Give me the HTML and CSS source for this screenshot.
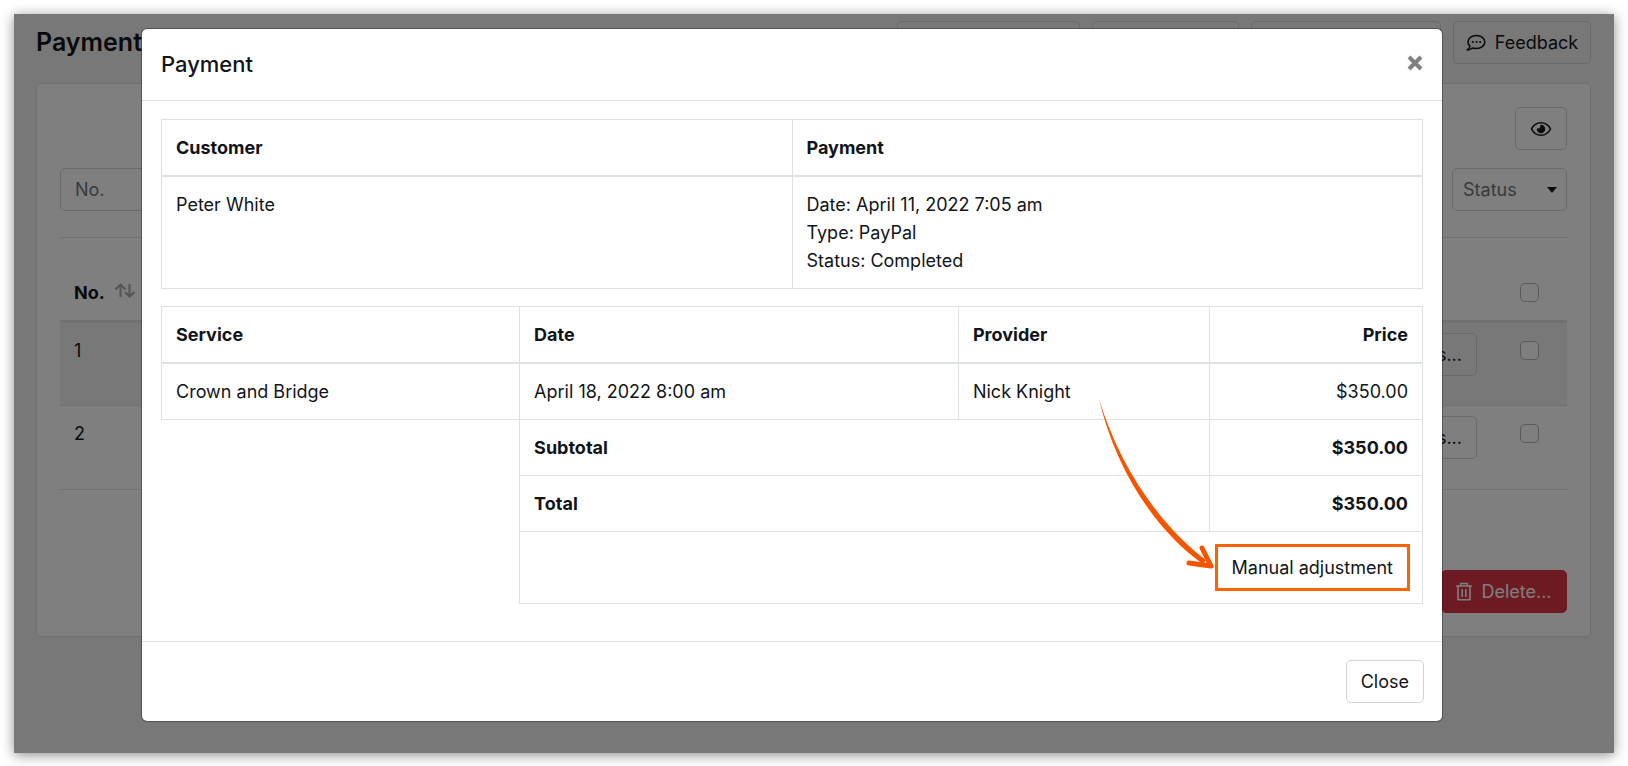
FILE: index.html
```html
<!DOCTYPE html>
<html lang="en">
<head>
    <meta charset="UTF-8">
    <meta name="viewport" content="width=device-width, initial-scale=1.0">
    <title>Payments</title>
    <link rel="stylesheet" href="styles.css">
</head>
<body>
    <div class="screen">
        <div class="page">
            <div class="page-header">
                <h1 class="page-title">Payments</h1>
                <div class="toolbar">
                    <button type="button" class="btn btn-export" aria-label="Export"></button>
                    <button type="button" class="btn btn-print" aria-label="Print"></button>
                    <button type="button" class="btn btn-requests" aria-label="Requests"></button>
                    <button type="button" class="btn btn-feedback">
                        <svg class="icon" viewBox="0 0 20 18" width="20" height="18">
                            <path d="M10.500 1.500C5.700 1.500 2 4.300 2 7.900c0 1.700.8 3.100 2 4.200-.3 1.400-1.600 2.900-2.700 3.800 2 .1 3.800-.7 5.200-1.900 1.100.4 2.500.5 4 .5 4.600 0 8.300-2.900 8.300-6.600S15.100 1.500 10.500 1.500z" fill="none" stroke="currentColor" stroke-width="1.600" stroke-linejoin="round"/>
                            <circle cx="6.800" cy="8" r="1.100"/><circle cx="10.500" cy="8" r="1.100"/><circle cx="14.200" cy="8" r="1.100"/>
                        </svg>
                        <span>Feedback</span>
                    </button>
                </div>
            </div>

            <div class="card">
                <div class="card-tools">
                    <button type="button" class="btn btn-eye" aria-label="Columns">
                        <svg class="icon" viewBox="0 0 22 16" width="22" height="16">
                            <path d="M1.500 8C3.500 4 7 1.800 11 1.800S18.500 4 20.500 8c-2 4-5.500 6.200-9.500 6.200S3.500 12 1.500 8z" fill="none" stroke="currentColor" stroke-width="1.600" stroke-linejoin="round"/>
                            <path d="M11 3.800a4.200 4.200 0 1 1-4.100 3.400 2.300 2.300 0 0 0 3.400-2.600c0-.3.300-.8.700-.8z"/>
                        </svg>
                    </button>
                </div>
                <div class="filters">
                    <input type="text" class="form-control" placeholder="No." aria-label="No.">
                    <div class="select-wrap">
                        <select class="form-control" aria-label="Status">
                            <option>Status</option>
                            <option>Completed</option>
                            <option>Pending</option>
                        </select>
                    </div>
                </div>
                <table class="list">
                    <thead>
                        <tr>
                            <th>No.
                                <svg class="sort" viewBox="0 0 22 16" width="22" height="16">
                                    <path d="M6.500 14V2M1.500 6.500l5-5 5 5M15.500 1v12M11 9l4.500 4.500L20.500 9" fill="none" stroke="currentColor" stroke-width="2"/>
                                </svg>
                            </th>
                            <th></th>
                            <th class="check"><input type="checkbox" aria-label="Select all"></th>
                        </tr>
                    </thead>
                    <tbody>
                        <tr>
                            <td>1</td>
                            <td class="actions"><button type="button" class="btn">Details...</button></td>
                            <td class="check"><input type="checkbox" aria-label="Select payment 1"></td>
                        </tr>
                        <tr>
                            <td>2</td>
                            <td class="actions"><button type="button" class="btn">Details...</button></td>
                            <td class="check"><input type="checkbox" aria-label="Select payment 2"></td>
                        </tr>
                    </tbody>
                </table>
                <div class="card-actions">
                    <button type="button" class="btn btn-danger">
                        <svg class="icon" viewBox="0 0 16 19" width="16" height="19">
                            <path d="M0 4h16M4.800 4V1.500h6.400V4M2 4v13.800h12V4M6.200 7v8M9.800 7v8" fill="none" stroke="currentColor" stroke-width="1.600" stroke-linejoin="round"/>
                        </svg>
                        <span>Delete...</span>
                    </button>
                </div>
            </div>
        </div>

        <div class="backdrop">
            <div class="modal" role="dialog" aria-labelledby="modal-title">
                <div class="modal-header">
                    <h2 class="modal-title" id="modal-title">Payment</h2>
                    <button type="button" class="btn-x" aria-label="Dismiss">
                        <svg viewBox="0 0 16 16" width="16" height="16">
                            <path d="M2 2l12 12M14 2L2 14" stroke="currentColor" stroke-width="4"/>
                        </svg>
                    </button>
                </div>
                <div class="modal-body">
                    <table class="table">
                        <thead>
                            <tr>
                                <th class="col-half">Customer</th>
                                <th class="col-half">Payment</th>
                            </tr>
                        </thead>
                        <tbody>
                            <tr>
                                <td>Peter White</td>
                                <td>
                                    <div class="details">
                                        <div>Date: April 11, 2022 7:05 am</div>
                                        <div>Type: PayPal</div>
                                        <div>Status: Completed</div>
                                    </div>
                                </td>
                            </tr>
                        </tbody>
                    </table>
                    <table class="table">
                        <thead>
                            <tr>
                                <th class="col-service">Service</th>
                                <th class="col-date">Date</th>
                                <th class="col-provider">Provider</th>
                                <th class="col-price num">Price</th>
                            </tr>
                        </thead>
                        <tbody>
                            <tr>
                                <td>Crown and Bridge</td>
                                <td>April 18, 2022 8:00 am</td>
                                <td>Nick Knight</td>
                                <td class="num">$350.00</td>
                            </tr>
                        </tbody>
                        <tfoot>
                            <tr>
                                <td class="blank" rowspan="3"></td>
                                <th colspan="2">Subtotal</th>
                                <th class="num">$350.00</th>
                            </tr>
                            <tr>
                                <th colspan="2">Total</th>
                                <th class="num">$350.00</th>
                            </tr>
                            <tr>
                                <td class="num" colspan="3">
                                    <div class="callout">
                                        <button type="button" class="btn">Manual adjustment</button>
                                        <svg class="arrow" viewBox="2 0 120 176" width="120" height="176">
                                            <path d="M4 4C19 69 57 133 108 169L111 165C64 130 24 70 4 4z" fill="currentColor"/>
                                            <path d="M107 153l9 18-22-3" fill="none" stroke="currentColor" stroke-width="5" stroke-linecap="round" stroke-linejoin="round"/>
                                        </svg>
                                    </div>
                                </td>
                            </tr>
                        </tfoot>
                    </table>
                </div>
                <div class="modal-footer">
                    <button type="button" class="btn">Close</button>
                </div>
            </div>
        </div>
    </div>
</body>
</html>
```
FILE: styles.css
```css
* {
    box-sizing: border-box;
}
body {
    margin: 0;
    padding: 14px;
    background: #fff;
    color: #111418;
    font-family: Inter, "Liberation Sans", sans-serif;
    font-size: 18px;
    line-height: 27px;
}
.screen {
    position: relative;
    background: #f1f1f1;
    box-shadow: 0 2px 12px rgba(0, 0, 0, 0.45);
}
.page {
    padding: 7px 23px 116px 22px;
}

/* Buttons and fields */
.btn {
    display: inline-flex;
    align-items: center;
    justify-content: center;
    gap: 9px;
    height: 43px;
    padding: 0 14px;
    background: #fff;
    border: 1px solid #ced4da;
    border-radius: 5px;
    color: inherit;
    font: inherit;
    cursor: pointer;
}
.icon {
    flex-shrink: 0;
    fill: currentColor;
}
.form-control {
    height: 43px;
    padding: 0 14px;
    background: #fff;
    border: 1px solid #ced4da;
    border-radius: 5px;
    color: #6c757d;
    font: inherit;
}
.form-control::placeholder {
    color: #6c757d;
}
input[type="checkbox"] {
    display: block;
    width: 19px;
    height: 19px;
    margin: 4px auto;
    appearance: none;
    background: #fff;
    border: 1px solid #adb5bd;
    border-radius: 5px;
}

/* Page */
.page-header {
    display: flex;
    justify-content: space-between;
    align-items: center;
    margin-bottom: 19px;
}
.page-title {
    margin: 0;
    font-size: 25px;
    font-weight: 600;
}
.toolbar {
    display: flex;
    gap: 12px;
}
.toolbar .btn {
    background: transparent;
}
.btn-export {
    width: 183px;
}
.btn-print {
    width: 147px;
}
.btn-requests {
    width: 190px;
}
.toolbar .btn-feedback {
    width: 138px;
    padding: 0;
}
.card {
    padding: 23px;
    background: #fff;
    border: 1px solid #dfdfdf;
    border-radius: 5px;
}
.card-tools {
    display: flex;
    justify-content: flex-end;
    margin-bottom: 18px;
}
.btn-eye {
    width: 52px;
}
.filters {
    display: flex;
    justify-content: space-between;
    padding-bottom: 26px;
    margin-bottom: 27px;
    border-bottom: 1px solid #dee2e6;
}
.select-wrap {
    position: relative;
}
.select-wrap .form-control {
    width: 115px;
    padding: 0 10px;
    appearance: none;
}
.select-wrap::after {
    content: "";
    position: absolute;
    top: 19px;
    right: 10px;
    border: 5px solid transparent;
    border-top: 6px solid #111418;
    border-bottom: 0;
    pointer-events: none;
}
.list {
    width: 100%;
    border-collapse: collapse;
}
.list th,
.list td {
    padding: 14px;
    text-align: left;
    vertical-align: top;
}
.list thead tr {
    border-bottom: 3px solid #dee2e6;
}
.list tbody tr {
    height: 84px;
    border-bottom: 1px solid #dee2e6;
}
.list tbody tr:nth-child(odd) {
    background: #f1f1f1;
}
.list .actions {
    padding-top: 10px;
    padding-bottom: 0;
    text-align: right;
}
.list .actions .btn {
    background: transparent;
}
.list .check {
    width: 76px;
}
.sort {
    margin-left: 6px;
    color: #a8a8a8;
}
.card-actions {
    display: flex;
    justify-content: flex-end;
    margin-top: 80px;
}
.btn-danger {
    width: 126px;
    padding: 0 12px;
    background: #dc3545;
    border-color: #dc3545;
    color: #fff;
}

/* Modal */
.backdrop {
    position: absolute;
    inset: 0;
    padding: 14px 171px 0 127px;
    background: rgba(0, 0, 0, 0.5);
}
.modal {
    background: #fff;
    background-clip: padding-box;
    border: 1px solid rgba(0, 0, 0, 0.3);
    border-radius: 6px;
}
.modal-header {
    display: flex;
    justify-content: space-between;
    align-items: flex-start;
    padding: 22px 19px;
    border-bottom: 1px solid #dee2e6;
}
.modal-title {
    margin: 0;
    font-size: 22px;
    font-weight: 500;
}
.btn-x {
    display: flex;
    padding: 4px 0;
    background: none;
    border: 0;
    color: #808080;
    cursor: pointer;
}
.modal-body {
    padding: 18px 19px;
}
.table {
    width: 100%;
    border-collapse: collapse;
    table-layout: fixed;
}
.table + .table {
    margin: 17px 0 19px;
}
.table th,
.table td {
    padding: 14px;
    border: 1px solid #dee2e6;
    text-align: left;
    vertical-align: top;
}
.table thead th {
    border-bottom-width: 2px;
}
.table .num {
    text-align: right;
}
.table .blank {
    border-left-color: transparent;
    border-bottom-color: transparent;
}
th {
    font-weight: 700;
}
.details {
    display: grid;
    gap: 1px;
}
.col-half {
    width: 50%;
}
.col-service {
    width: 28.4%;
}
.col-date {
    width: 34.8%;
}
.col-provider {
    width: 19.9%;
}
.col-price {
    width: 16.9%;
}
.modal-footer {
    display: flex;
    justify-content: flex-end;
    padding: 18px;
    border-top: 1px solid #dee2e6;
}

/* Highlighted action with its pointer */
.callout {
    display: inline-flex;
    position: relative;
    vertical-align: top;
    outline: 3px solid #ff6200;
    outline-offset: -1px;
}
.arrow {
    position: absolute;
    right: 100%;
    bottom: 18px;
    color: #f75400;
    pointer-events: none;
}
```
